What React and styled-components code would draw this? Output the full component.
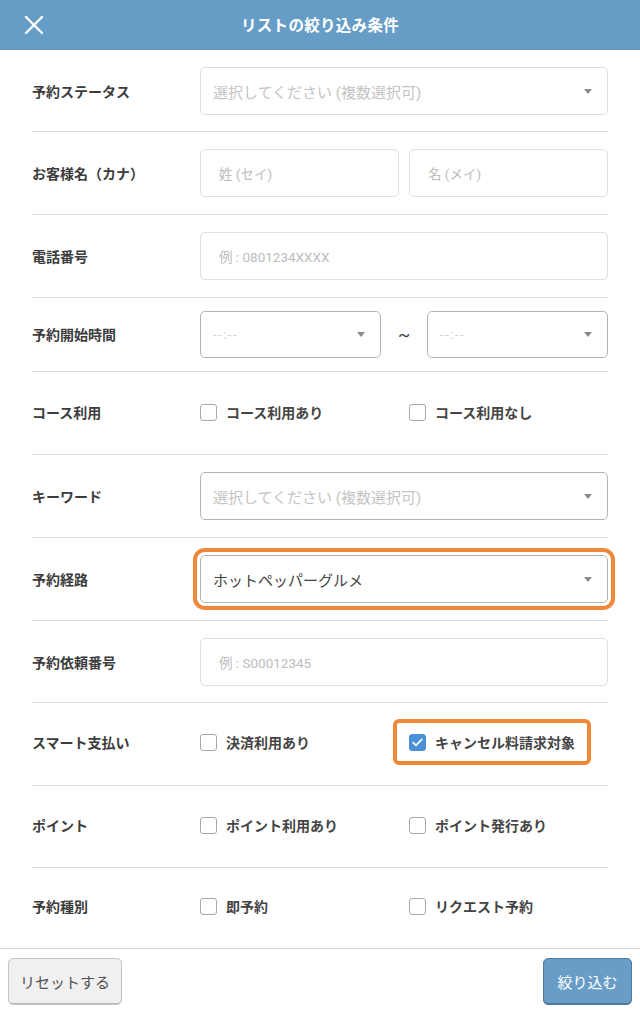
import React from "react";
import styled, { createGlobalStyle } from "styled-components";

const Global = createGlobalStyle`
  * { box-sizing: border-box; }
  html, body { margin: 0; padding: 0; background: #fff; }
  body { font-family: Roboto, "Noto Sans CJK JP", "Noto Sans", sans-serif; color: #333; }
`;

const Page = styled.div`
  width: 640px;
  height: 1012px;
  display: flex;
  flex-direction: column;
  background: #fff;
`;

const Header = styled.header`
  height: 50px;
  flex: 0 0 50px;
  background: #659dc7;
  display: flex;
  align-items: center;
  justify-content: center;
  position: relative;
`;

const CloseBtn = styled.button`
  position: absolute;
  left: 20px;
  top: 11px;
  width: 28px;
  height: 28px;
  padding: 0;
  border: 0;
  background: transparent;
  display: flex;
  align-items: center;
  justify-content: center;
`;

const Title = styled.h1`
  margin: 0 0 2px;
  font-size: 15.5px;
  font-weight: 700;
  color: #fff;
  letter-spacing: 0.3px;
`;

const Body = styled.div`
  flex: 1;
  padding: 0 32px;
  display: flex;
  flex-direction: column;
`;

const Row = styled.div`
  display: flex;
  align-items: center;
  padding: ${(p) => p.$pad || "17px 0"};
  border-bottom: ${(p) => (p.$last ? "none" : "1px solid #dcdcdc")};
`;

const Label = styled.div`
  width: 168px;
  flex: 0 0 168px;
  font-size: 14px;
  font-weight: 700;
  color: #3c3c3c;
`;

const Field = styled.div`
  flex: 1;
  display: flex;
  align-items: center;
  gap: ${(p) => p.$gap || "10px"};
  min-height: 48px;
`;

const SelectBox = styled.div`
  flex: 1;
  height: ${(p) => p.$h || "48px"};
  border: 1px solid ${(p) => p.$border || "#dedede"};
  border-radius: 5px;
  background: #fff;
  display: flex;
  align-items: center;
  justify-content: space-between;
  padding: 0 12px 0 12px;
  font-size: 15px;
  color: ${(p) => (p.$value ? "#444" : "#c4c4c4")};
  box-shadow: ${(p) => (p.$highlight ? "0 0 0 3px #fff, 0 0 0 7px #f0883a" : "none")};
`;

const Arrow = styled.span`
  width: 0;
  height: 0;
  border-left: 4.5px solid transparent;
  border-right: 4.5px solid transparent;
  border-top: 5px solid #8a8a8a;
  margin-right: 3px;
`;

const TextInput = styled.div`
  flex: 1;
  height: 48px;
  border: 1px solid #e0e0e0;
  border-radius: 5px;
  display: flex;
  align-items: center;
  padding: 0 18px;
  font-size: 13.5px;
  color: #bcbcbc;
`;

const Tilde = styled.span`
  font-size: 18px;
  color: #444;
  width: 26px;
  text-align: center;
`;

const TimePlaceholder = styled.span`
  font-size: 13px;
  color: #d2d2d2;
  letter-spacing: 1.5px;
`;

const CheckGroup = styled.div`
  flex: 1;
  display: grid;
  grid-template-columns: 209px 1fr;
  align-items: center;
  height: 48px;
`;

const CheckItem = styled.label`
  display: flex;
  align-items: center;
  gap: 9px;
  font-size: 14px;
  font-weight: 700;
  color: #444;
  position: relative;
  justify-self: start;

  &::before {
    content: "";
    display: ${(p) => (p.$highlight ? "block" : "none")};
    position: absolute;
    top: -13px;
    bottom: -13px;
    left: -16px;
    right: -16px;
    border: 4px solid #f0883a;
    border-radius: 6px;
    pointer-events: none;
  }
`;

const Box = styled.span`
  width: 17px;
  height: 17px;
  flex: 0 0 17px;
  border-radius: 3px;
  border: 1px solid ${(p) => (p.$checked ? "#4a91d8" : "#a8a8a8")};
  background: ${(p) => (p.$checked ? "#4a91d8" : "#fff")};
  display: flex;
  align-items: center;
  justify-content: center;
`;

const Footer = styled.footer`
  border-top: 1px solid #d6d6d6;
  padding: 9px 8px 7px;
  display: flex;
  justify-content: space-between;
`;

const ResetButton = styled.button`
  height: 47px;
  width: 114px;
  border: 1px solid #c4c4c4;
  border-radius: 5px;
  background: #f0f0f0;
  box-shadow: inset 0 -1px 0 #b8b8b8;
  font-family: inherit;
  font-size: 15px;
  color: #505050;
`;

const SubmitButton = styled.button`
  height: 47px;
  width: 89px;
  border: 1px solid #4f7a9c;
  border-radius: 5px;
  background: #679dc7;
  box-shadow: inset 0 -1px 0 #4f7a9c;
  font-family: inherit;
  font-size: 15px;
  color: #fff;
`;

const Check = ({ label, checked, highlight }) => (
  <CheckItem $highlight={highlight}>
    <Box $checked={checked}>
      {checked && (
        <svg width="11" height="9" viewBox="0 0 11 9">
          <path d="M1.2 4.6 L4 7.3 L9.8 1.4" fill="none" stroke="#fff" strokeWidth="1.8" strokeLinecap="round" strokeLinejoin="round" />
        </svg>
      )}
    </Box>
    {label}
  </CheckItem>
);

const Select = ({ text, value, border, highlight, h }) => (
  <SelectBox $value={value} $border={border} $highlight={highlight} $h={h}>
    <span>{text}</span>
    <Arrow />
  </SelectBox>
);

export default function App() {
  return (
    <Page>
      <Global />
      <Header>
        <CloseBtn aria-label="close">
          <svg width="22" height="22" viewBox="0 0 22 22">
            <path d="M3 3 L19 19 M19 3 L3 19" stroke="#fff" strokeWidth="2.4" strokeLinecap="round" />
          </svg>
        </CloseBtn>
        <Title>リストの絞り込み条件</Title>
      </Header>
      <Body>
        <Row $pad="17px 0 16px">
          <Label>予約ステータス</Label>
          <Field>
            <Select text="選択してください (複数選択可)" />
          </Field>
        </Row>
        <Row>
          <Label>お客様名（カナ）</Label>
          <Field>
            <TextInput>姓 (セイ)</TextInput>
            <TextInput>名 (メイ)</TextInput>
          </Field>
        </Row>
        <Row>
          <Label>電話番号</Label>
          <Field>
            <TextInput>例 : 0801234XXXX</TextInput>
          </Field>
        </Row>
        <Row $pad="12px 0 13px">
          <Label>予約開始時間</Label>
          <Field $gap="10px">
            <Select text={<TimePlaceholder>--:--</TimePlaceholder>} border="#b4b4b4" h="47px" />
            <Tilde>~</Tilde>
            <Select text={<TimePlaceholder>--:--</TimePlaceholder>} border="#b4b4b4" h="47px" />
          </Field>
        </Row>
        <Row $pad="16px 0 18px">
          <Label>コース利用</Label>
          <CheckGroup>
            <Check label="コース利用あり" />
            <Check label="コース利用なし" />
          </CheckGroup>
        </Row>
        <Row>
          <Label>キーワード</Label>
          <Field>
            <Select text="選択してください (複数選択可)" border="#b4b4b4" />
          </Field>
        </Row>
        <Row>
          <Label>予約経路</Label>
          <Field>
            <Select text="ホットペッパーグルメ" value border="#b4b4b4" highlight />
          </Field>
        </Row>
        <Row $pad="17px 0 16px">
          <Label>予約依頼番号</Label>
          <Field>
            <TextInput>例 : S00012345</TextInput>
          </Field>
        </Row>
        <Row $pad="15px 0 19px">
          <Label>スマート支払い</Label>
          <CheckGroup>
            <Check label="決済利用あり" />
            <Check label="キャンセル料請求対象" checked highlight />
          </CheckGroup>
        </Row>
        <Row $pad="15px 0 18px">
          <Label>ポイント</Label>
          <CheckGroup>
            <Check label="ポイント利用あり" />
            <Check label="ポイント発行あり" />
          </CheckGroup>
        </Row>
        <Row $last $pad="14px 0 18px">
          <Label>予約種別</Label>
          <CheckGroup>
            <Check label="即予約" />
            <Check label="リクエスト予約" />
          </CheckGroup>
        </Row>
      </Body>
      <Footer>
        <ResetButton>リセットする</ResetButton>
        <SubmitButton>絞り込む</SubmitButton>
      </Footer>
    </Page>
  );
}
